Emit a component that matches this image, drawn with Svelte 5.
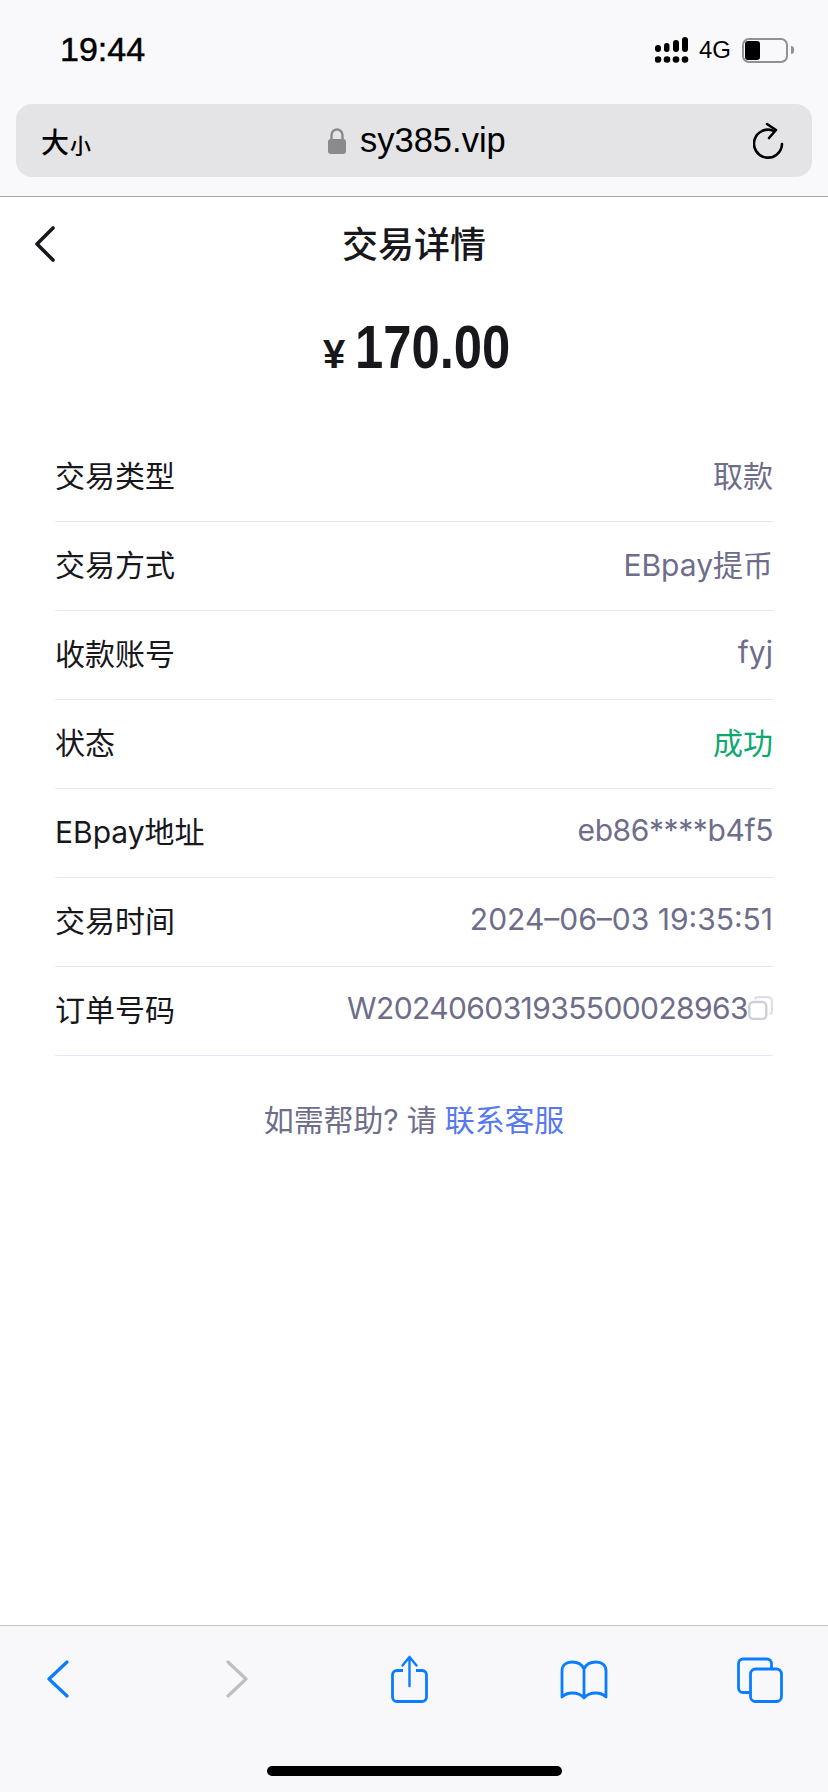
<script>
  const rows = [
    { label: '交易类型', value: '取款' },
    { label: '交易方式', value: 'EBpay提币' },
    { label: '收款账号', value: 'fyj' },
    { label: '状态', value: '成功', ok: true },
    { label: 'EBpay地址', value: 'eb86****b4f5', tight: true },
    { label: '交易时间', value: '2024–06–03 19:35:51' },
    { label: '订单号码', value: 'W202406031935500028963', tighter: true, copy: true }
  ];
</script>

<div class="phone">
  <header class="chrome">
    <div class="status">
      <span class="time">19:44</span>
      <div class="sys">
        <svg width="34" height="26" viewBox="0 0 34 26">
          <g fill="#000">
            <rect x="0" y="8" width="6" height="7" rx="3"/><rect x="9" y="6" width="5.500" height="9" rx="2.700"/><rect x="18" y="3" width="6" height="12" rx="3"/><rect x="27" y="0" width="6" height="15" rx="3"/>
            <circle cx="3" cy="22.500" r="3.300"/><circle cx="12" cy="22.500" r="3.300"/><circle cx="21" cy="22.500" r="3.300"/><circle cx="30" cy="22.500" r="3.300"/>
          </g>
        </svg>
        <span class="net">4G</span>
        <div class="battery"><span class="level"></span></div>
        <span class="cap"></span>
      </div>
    </div>
    <div class="urlbar">
      <span class="size">大<small>小</small></span>
      <div class="addr">
        <svg width="20" height="28" viewBox="0 0 20 28"><path d="M4.500 13V8a5.500 5.500 0 0 1 11 0v5" fill="none" stroke="#8a8a8e" stroke-width="2.400"/><rect x="1" y="12" width="18" height="15" rx="3" fill="#8a8a8e"/></svg>
        <span>sy385.vip</span>
      </div>
      <svg width="32" height="40" viewBox="0 0 32 40"><path d="M29 23A14 14 0 1 1 21 10" fill="none" stroke="#000" stroke-width="2.600" stroke-linecap="round"/><path d="M14 3l9 6-7 8" fill="none" stroke="#000" stroke-width="2.600" stroke-linecap="round" stroke-linejoin="round"/></svg>
    </div>
  </header>

  <main class="page">
    <nav class="title">
      <svg class="back" width="22" height="36" viewBox="0 0 22 36"><path d="M19 2 3 18l16 16" fill="none" stroke="#17171c" stroke-width="3.600" stroke-linecap="round" stroke-linejoin="round"/></svg>
      <h1>交易详情</h1>
    </nav>
    <div class="amount"><span class="yen">¥</span><span class="num">170.00</span></div>
    <ul class="rows">
      {#each rows as row}
        <li>
          <span class="label">{row.label}</span>
          <span class="value" class:ok={row.ok} class:tight={row.tight} class:tighter={row.tighter}>{row.value}{#if row.copy}<svg class="copy" width="25" height="24" viewBox="0 0 25 24"><path d="M7 3.500a3 3 0 0 1 3-2.400h10a4 4 0 0 1 4 4v10a3 3 0 0 1-2.500 3" fill="none" stroke="#dfdfe7" stroke-width="2.200"/><rect x="1.300" y="6" width="17" height="17" rx="4" fill="#fff" stroke="#cfcfda" stroke-width="2.400"/></svg>{/if}</span>
        </li>
      {/each}
    </ul>
    <p class="help">如需帮助? 请 <a href="#top">联系客服</a></p>
  </main>

  <footer class="toolbar">
    <div class="icons">
      <svg class="i-back" width="24" height="38" viewBox="0 0 24 38"><path d="M21 2 3 19l18 17" fill="none" stroke="#0a7cff" stroke-width="3.200" stroke-linecap="round" stroke-linejoin="round"/></svg>
      <svg class="i-fwd" width="24" height="38" viewBox="0 0 24 38"><path d="m3 2 18 17L3 36" fill="none" stroke="#bfbfc1" stroke-width="3.200" stroke-linecap="round" stroke-linejoin="round"/></svg>
      <svg class="i-share" width="38" height="48" viewBox="0 0 38 48"><path d="M13 15.500H7a4.500 4.500 0 0 0-4.500 4.500v22a4.500 4.500 0 0 0 4.500 4.500h25a4.500 4.500 0 0 0 4.500-4.500V20a4.500 4.500 0 0 0-4.500-4.500h-6" fill="none" stroke="#0a7cff" stroke-width="2.800"/><path d="M19.500 2v29M12.500 10.500l7-8.500 7 8.500" fill="none" stroke="#0a7cff" stroke-width="2.400" stroke-linecap="round" stroke-linejoin="round"/></svg>
      <svg class="i-book" width="48" height="40" viewBox="0 0 48 40"><path d="M24 37V9C22 4 17 2 12 2 6 2 2 5 2 11v26c3-3 6-4 10-4 5 0 9 1 12 5 3-4 7-5 12-5 4 0 7 1 10 4V11c0-6-4-9-10-9-5 0-10 2-12 7" fill="none" stroke="#0a7cff" stroke-width="2.800" stroke-linejoin="round"/></svg>
      <svg class="i-tabs" width="46" height="46" viewBox="0 0 46 46"><path d="M34.500 11V6.500a4.500 4.500 0 0 0-4.500-4.500H6a4.500 4.500 0 0 0-4.500 4.500V31a4.500 4.500 0 0 0 4.500 4.500h6.500" fill="none" stroke="#0a7cff" stroke-width="2.800"/><rect x="13.500" y="12" width="31" height="32.500" rx="5" fill="none" stroke="#0a7cff" stroke-width="2.800"/></svg>
    </div>
    <div class="home"></div>
  </footer>
</div>

<style>
  :global(body) { margin: 0; background: #fff; }
  .phone {
    width: 828px; height: 1792px; display: flex; flex-direction: column;
    font-family: "Inter", "Noto Sans CJK SC", sans-serif; color: #17171c; overflow: hidden;
  }
  .chrome { height: 196px; background: #f9f9fb; border-bottom: 1px solid #a9a9ab; flex: none; }
  .status { height: 104px; display: flex; justify-content: space-between; align-items: flex-start; padding: 0 34px 0 60px; box-sizing: border-box; }
  .time { font-family: "Liberation Sans", sans-serif; font-size: 34px; font-weight: 500; margin-top: 30px; line-height: 38px; color: #000; -webkit-text-stroke: .5px #000; }
  .sys { display: flex; align-items: center; margin-top: 37px; height: 26px; }
  .net { font-family: "Liberation Sans", sans-serif; font-size: 24px; margin-left: 10px; width: 31px; color: #000; }
  .battery { margin-left: 12px; width: 46px; height: 25px; border: 2px solid #919193; border-radius: 7px; box-sizing: border-box; padding: 1px; }
  .level { display: block; width: 15px; height: 19px; background: #000; border-radius: 3px; }
  .cap { width: 3px; height: 8px; background: #919193; border-radius: 0 3px 3px 0; margin-left: 3px; }
  .urlbar { margin: 0 16px; height: 73px; border-radius: 16px; background: #e4e4e6; display: flex; align-items: center; justify-content: space-between; padding: 0 27px 0 25px; position: relative; }
  .size { font-family: "Noto Sans CJK SC", sans-serif; font-size: 28px; font-weight: 500; color: #000; }
  .size small { font-size: 21px; margin-left: 1px; }
  .addr { position: absolute; left: 311px; top: 0; height: 73px; display: flex; align-items: center; gap: 13px; font-family: "Liberation Sans", sans-serif; font-size: 34.5px; color: #000; }
  .title { height: 88px; display: flex; align-items: center; justify-content: center; position: relative; }
  .title h1 { margin: 2px 0 0; font-size: 36px; font-weight: 500; font-family: "Noto Sans CJK SC", sans-serif; }
  .back { position: absolute; left: 34px; top: 29px; }
  .amount { height: 127px; display: flex; align-items: baseline; justify-content: center; gap: 10px; padding: 27px 0 0 5px; box-sizing: border-box; font-family: "Liberation Sans", sans-serif; font-weight: 700; color: #17171c; }
  .yen { font-size: 40px; }
  .num { font-size: 61.500px; line-height: 70px; display: inline-block; transform: scaleX(.825); transform-origin: left center; width: 155px; white-space: nowrap; }
  .rows { list-style: none; margin: 21px 55px 0; padding: 0; }
  .rows li { height: 89px; box-sizing: border-box; padding-bottom: 6px; border-bottom: 1px solid #e4e8f8; display: flex; justify-content: space-between; align-items: center; font-size: 30px; }
  .value { color: #6e6d8a; display: flex; align-items: center; white-space: nowrap; }
  .value.ok { color: #0ba870; }
  .value.tight { letter-spacing: -.4px; }
  .value.tighter { letter-spacing: -.6px; }
  .copy { flex: none; }
  .help { margin: 44px 0 0; text-align: center; font-size: 30px; line-height: 40px; color: #6e6d8a; letter-spacing: -.15px; }
  .help a { color: #5679f0; text-decoration: none; }
  .page { flex: 1; background: #fff; }
  .toolbar { height: 166px; flex: none; background: #f8f8fa; border-top: 1px solid #c2c2c4; position: relative; }
  .icons { display: flex; align-items: flex-start; padding-left: 46px; }
  .i-back { margin-top: 34px; }
  .i-fwd { margin: 34px 0 0 155px; }
  .i-share { margin: 29px 0 0 141px; }
  .i-book { margin: 34px 0 0 132px; }
  .i-tabs { margin: 31px 0 0 129px; }
  .home { position: absolute; left: 267px; top: 140px; width: 295px; height: 10px; background: #000; border-radius: 5px; }
</style>
